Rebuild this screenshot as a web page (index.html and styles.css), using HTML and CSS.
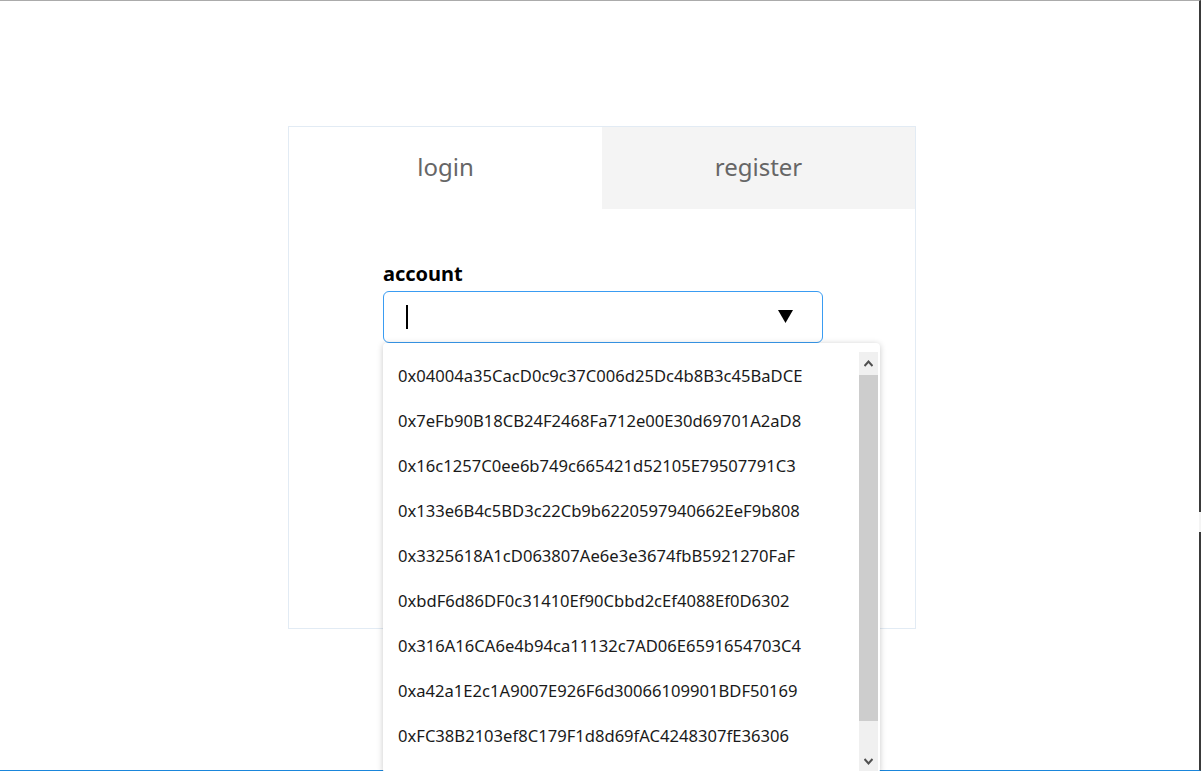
FILE: index.html
```html
<!DOCTYPE html>
<html>
<head>
<meta charset="utf-8">
<link rel="stylesheet" href="styles.css">
</head>
<body>
<div class="frame">
  <div class="card">
    <div class="tabs">
      <div class="tab active">login</div>
      <div class="tab">register</div>
    </div>
    <div class="form">
      <label class="label">account</label>
      <div class="select">
        <span class="caret"></span>
        <svg class="arrow" width="15" height="13" viewBox="0 0 15 13"><polygon points="0,0 15,0 7.5,13" fill="#000"/></svg>
        <div class="dropdown">
          <ul class="options">
            <li>0x04004a35CacD0c9c37C006d25Dc4b8B3c45BaDCE</li>
            <li>0x7eFb90B18CB24F2468Fa712e00E30d69701A2aD8</li>
            <li>0x16c1257C0ee6b749c665421d52105E79507791C3</li>
            <li>0x133e6B4c5BD3c22Cb9b6220597940662EeF9b808</li>
            <li>0x3325618A1cD063807Ae6e3e3674fbB5921270FaF</li>
            <li>0xbdF6d86DF0c31410Ef90Cbbd2cEf4088Ef0D6302</li>
            <li>0x316A16CA6e4b94ca11132c7AD06E6591654703C4</li>
            <li>0xa42a1E2c1A9007E926F6d30066109901BDF50169</li>
            <li>0xFC38B2103ef8C179F1d8d69fAC4248307fE36306</li>
          </ul>
          <div class="scrollbar">
            <div class="sb-btn"><svg width="9" height="7" viewBox="0 0 9 7"><path d="M0.5 6 L4.5 1.5 L8.5 6" fill="none" stroke="#505050" stroke-width="2"/></svg></div>
            <div class="sb-track"><div class="sb-thumb"></div></div>
            <div class="sb-btn"><svg width="9" height="7" viewBox="0 0 9 7"><path d="M0.5 1 L4.5 5.5 L8.5 1" fill="none" stroke="#505050" stroke-width="2"/></svg></div>
          </div>
        </div>
      </div>
    </div>
  </div>
</div>
</body>
</html>
```
FILE: styles.css
```css
html, body {
  margin: 0;
  padding: 0;
  overflow: hidden;
  background: #fff;
}
.frame {
  box-sizing: border-box;
  width: 1201px;
  height: 771px;
  border-top: 1px solid #ababab;
  border-right: 2px solid #3a3a3a;
  border-bottom: 1px solid #1a86db;
  padding-top: 125px;
  padding-left: 288px;
  position: relative;
  font-family: "Noto Sans", "Open Sans", sans-serif;
}
.frame::after {
  content: "";
  position: absolute;
  right: -2px;
  top: 511px;
  width: 2px;
  height: 20px;
  background: #f4f4f4;
}
.card {
  box-sizing: border-box;
  width: 628px;
  height: 503px;
  border: 1px solid #e2ebf4;
  background: #fff;
}
.tabs {
  display: flex;
  height: 82px;
}
.tab {
  flex: 1;
  display: flex;
  align-items: center;
  justify-content: center;
  font-size: 24px;
  color: #666;
  background: #f4f4f4;
  padding-bottom: 3px;
  box-sizing: border-box;
}
.tab.active {
  background: #fff;
}
.form {
  padding: 52px 0 0 94px;
}
.label {
  display: block;
  font-size: 20px;
  font-weight: 700;
  color: #000;
  line-height: 26px;
  height: 30px;
}
.select {
  position: relative;
  box-sizing: border-box;
  width: 440px;
  height: 52px;
  border: 1px solid #3a9cf2;
  border-radius: 6px;
  background: #fff;
}
.caret {
  position: absolute;
  left: 22px;
  top: 13px;
  width: 2px;
  height: 24px;
  background: #000;
}
.arrow {
  position: absolute;
  left: 394px;
  top: 18px;
}
.dropdown {
  position: absolute;
  left: -1px;
  top: 51px;
  width: 497px;
  height: 430px;
  background: #fff;
  border-radius: 4px;
  box-shadow: 0 1px 6px rgba(0,0,0,0.22);
  overflow: hidden;
  z-index: 5;
}
.options {
  list-style: none;
  margin: 0;
  padding: 10px 0 0 0;
}
.options li {
  height: 45px;
  line-height: 45px;
  padding-left: 15px;
  font-size: 16.6px;
  color: #1a1a1a;
  white-space: nowrap;
}
.scrollbar {
  position: absolute;
  top: 9px;
  left: 476px;
  width: 19px;
  bottom: 0;
  background: #f0f0f0;
  display: flex;
  flex-direction: column;
}
.sb-btn {
  height: 23px;
  display: flex;
  align-items: center;
  justify-content: center;
}
.sb-track {
  flex: 1;
}
.sb-thumb {
  height: 346px;
  background: #cdcdcd;
}
```
